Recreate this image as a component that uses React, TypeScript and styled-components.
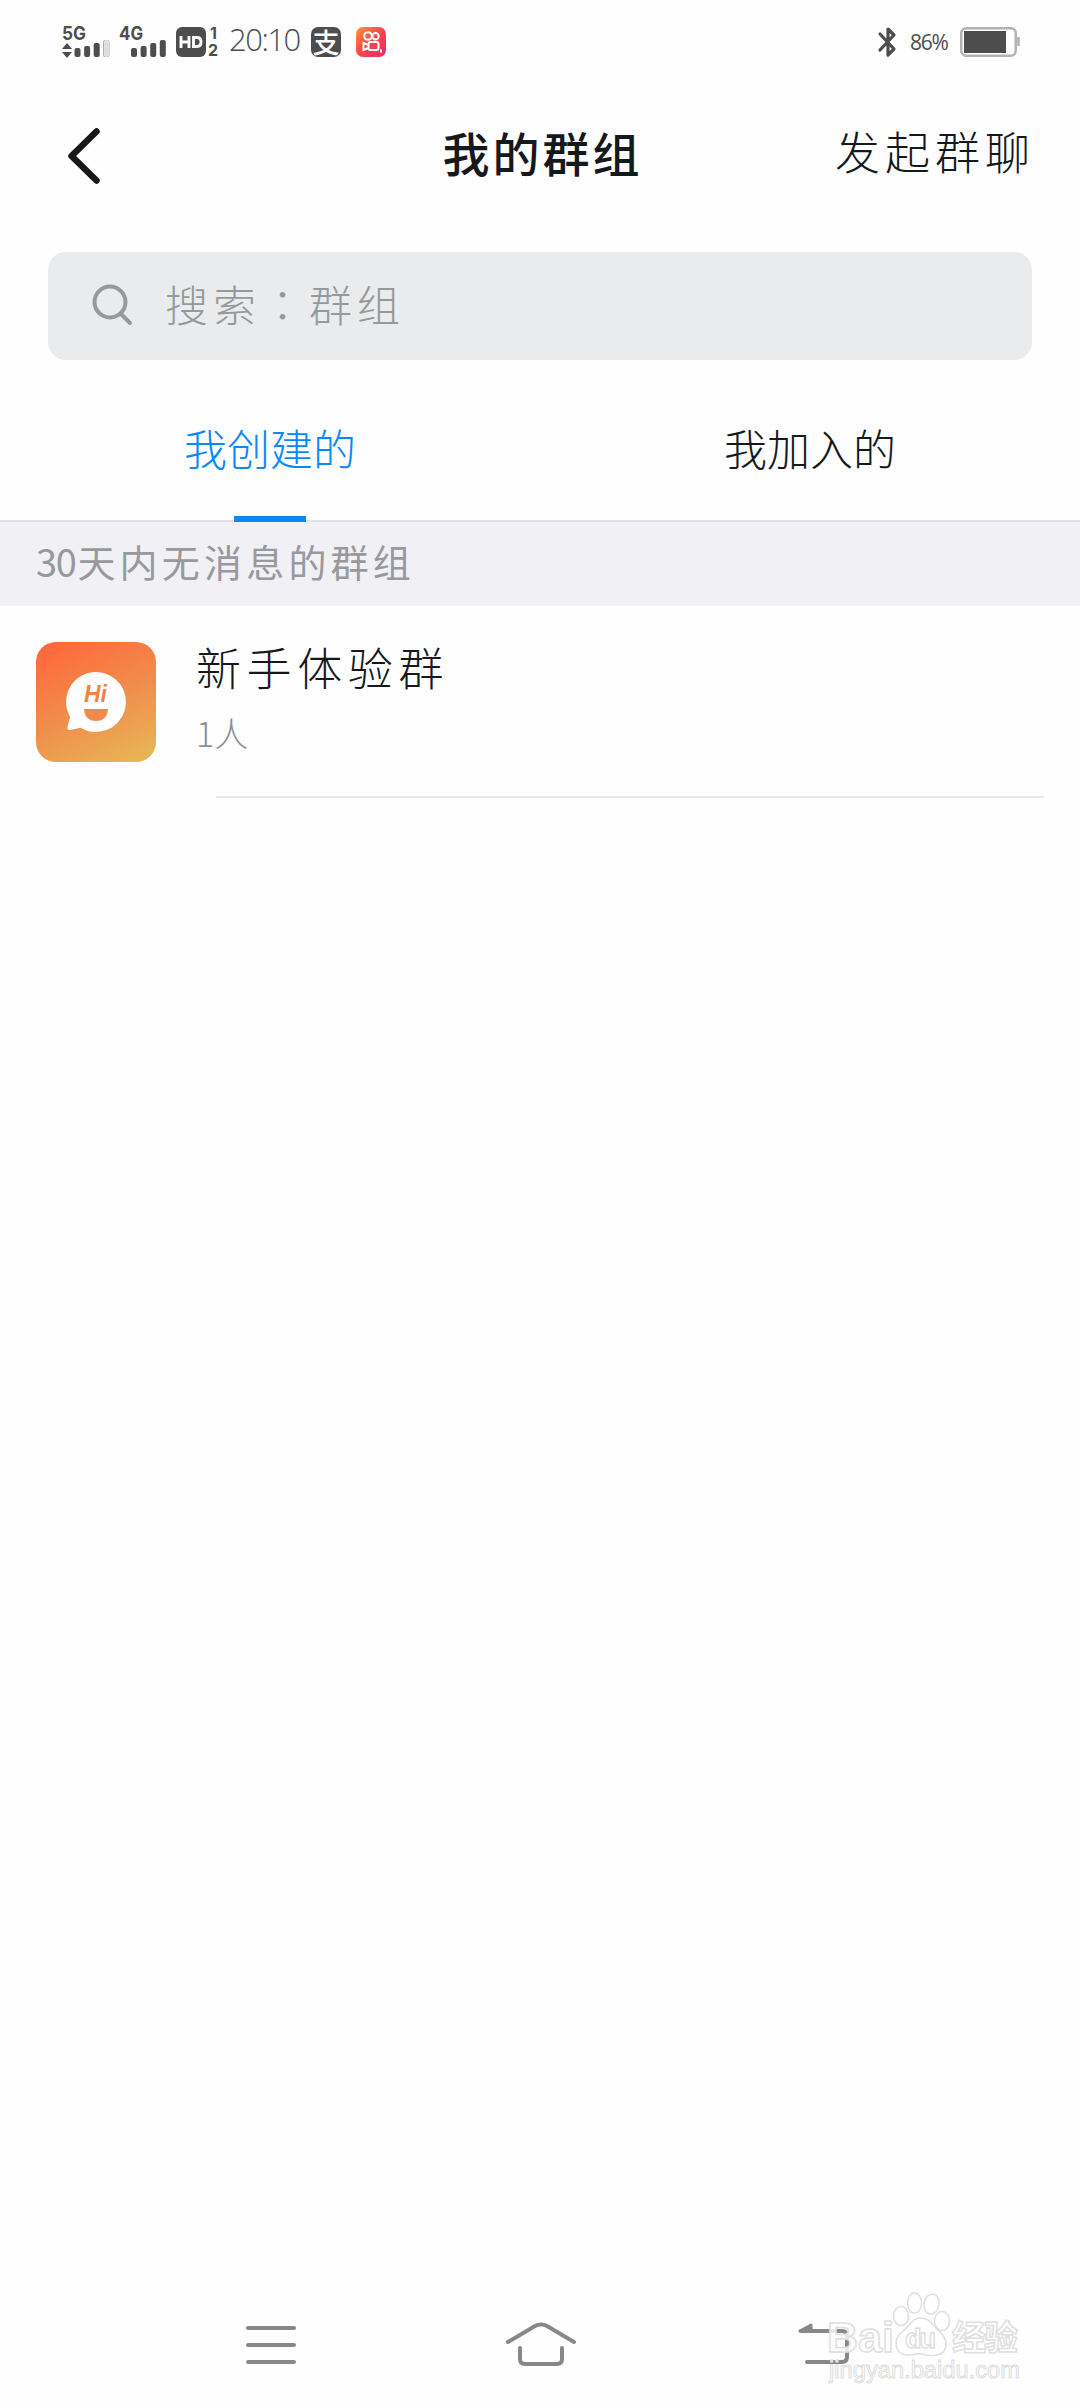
import React from "react";
import styled, { createGlobalStyle } from "styled-components";

const ink = "#16191c";
const chrome = "#4d4d4d";
const muted = "#98999d";
const blue = "#0a88f5";

const GlobalStyle = createGlobalStyle`
  *, *::before, *::after { box-sizing: border-box; }
  body {
    margin: 0;
    background: #fefefe;
    font-family: "Noto Sans CJK SC", "Noto Sans", sans-serif;
    font-weight: 300;
  }
  svg { display: block; flex: none; overflow: visible; }
`;

const Screen = styled.div`
  display: flex;
  flex-direction: column;
  width: 1080px;
  height: 2408px;
  background: #fefefe;
  color: ${ink};
  position: relative;
  overflow: hidden;
`;

const StatusBar = styled.header`
  display: flex;
  align-items: center;
  justify-content: space-between;
  height: 84px;
  padding: 0 60px 0 62px;
  color: ${chrome};
`;

const StatusGroup = styled.div<{ $gap: number }>`
  display: flex;
  align-items: center;
  gap: ${(p) => p.$gap}px;
`;

const SignalPair = styled.div`
  display: flex;
  gap: 8px;
  margin-right: 9px;
`;

const StatusText = styled.span<{ $size: number; $width: number; $spacing?: number }>`
  width: ${(p) => p.$width}px;
  font-family: "Open Sans", "Noto Sans", sans-serif;
  font-size: ${(p) => p.$size}px;
  font-weight: 400;
  letter-spacing: ${(p) => p.$spacing ?? 0}px;
  line-height: 40px;
  white-space: nowrap;
`;

const ClockText = styled(StatusText)`
  margin: -6px 0 0 10px;
  font-weight: 300;
`;

const AppBadge = styled.span<{ $background: string; $marginLeft: number }>`
  display: flex;
  align-items: center;
  justify-content: center;
  width: 30px;
  height: 30px;
  margin-left: ${(p) => p.$marginLeft}px;
  border-radius: 7px;
  background: ${(p) => p.$background};
  color: #fff;
  font-size: 27px;
  font-weight: 500;
  line-height: 30px;
`;

const TitleBar = styled.div`
  display: grid;
  grid-template-columns: 1fr auto 1fr;
  align-items: center;
  height: 140px;
  padding: 0 45px 0 64px;
`;

const BackButton = styled.button`
  justify-self: start;
  padding: 0;
  margin-top: 4px;
  border: 0;
  background: none;
`;

const Title = styled.h1`
  margin: 0 0 5px;
  font-size: 47px;
  font-weight: 500;
  letter-spacing: 3px;
  line-height: 70px;
  transform: translateX(-7px);
`;

const TitleAction = styled.button`
  justify-self: end;
  margin: 0 0 6px;
  padding: 0;
  border: 0;
  background: none;
  color: ${ink};
  font: inherit;
  font-size: 45px;
  letter-spacing: 5px;
  line-height: 70px;
  white-space: nowrap;
`;

const SearchBox = styled.div`
  display: flex;
  align-items: center;
  gap: 29px;
  height: 108px;
  margin: 28px 48px 0;
  padding: 0 0 0 42px;
  border-radius: 18px;
  background: #eaebed;
  color: #96999b;
`;

const Placeholder = styled.span`
  margin-bottom: 6px;
  font-size: 43px;
  letter-spacing: 5px;
  line-height: 64px;

  i {
    font-family: "Noto Sans CJK TC", sans-serif;
    font-style: normal;
  }
`;

const Tabs = styled.nav`
  display: grid;
  grid-template-columns: 1fr 1fr;
  height: 162px;
  border-bottom: 2px solid #e1e2e6;
`;

const Tab = styled.button<{ $active?: boolean }>`
  position: relative;
  display: flex;
  align-items: center;
  justify-content: center;
  padding: 14px 0 0;
  border: 0;
  background: none;
  color: ${(p) => (p.$active ? blue : ink)};
  font: inherit;
  font-size: 43px;

  &::after {
    content: "";
    display: ${(p) => (p.$active ? "block" : "none")};
    position: absolute;
    left: 234px;
    bottom: -2px;
    width: 72px;
    height: 6px;
    background: ${blue};
  }
`;

const SectionLabel = styled.h2`
  height: 84px;
  margin: 0;
  padding: 0 36px;
  background: #f1f0f5;
  color: ${muted};
  font-size: 38px;
  font-weight: 400;
  letter-spacing: 4.2px;
  line-height: 78px;
  white-space: nowrap;

  span {
    letter-spacing: -1.4px;
    margin-right: 2px;
  }
`;

const GroupRow = styled.article`
  display: flex;
  gap: 40px;
  height: 190px;
  padding: 36px 36px 0;
`;

const Avatar = styled.div`
  width: 120px;
  height: 120px;
  border-radius: 20px;
  background: linear-gradient(155deg, #ff6a3d 8%, #f08c4c 50%, #e8b455 94%);
`;

const GroupInfo = styled.div`
  display: flex;
  flex-direction: column;
  flex: 1;
`;

const GroupName = styled.h3`
  margin: -5px 0 0;
  font-size: 45px;
  font-weight: 300;
  letter-spacing: 5.6px;
  line-height: 60px;
`;

const MemberCount = styled.p`
  margin: 8px 0 0;
  color: #8a9197;
  font-size: 34px;
  line-height: 56px;
`;

const Divider = styled.hr`
  width: 828px;
  height: 2px;
  margin: 0 36px 0 216px;
  border: 0;
  background: #e9e9ea;
`;

const Spacer = styled.div`
  flex: 1;
`;

const NavigationBar = styled.footer`
  display: flex;
  justify-content: space-between;
  align-items: center;
  height: 124px;
  padding: 0 230px 0 244px;
`;

const HomeIcon = styled.svg`
  margin-left: -12px;
`;

const Watermark = styled.svg`
  position: absolute;
  left: 819px;
  top: 2285px;
`;

function Signal({ label, data }: { label: string; data?: boolean }) {
  return (
    <svg width={data ? 49 : 48} height="36" viewBox={`0 0 ${data ? 49 : 48} 36`} fill={chrome}>
      <text x="0" y="16" fontFamily="Inter, sans-serif" fontSize="19" fontWeight="700" textLength="24" lengthAdjust="spacingAndGlyphs">
        {label}
      </text>
      {data && <path d="M0 25 5 19l5 6zM0 28l5 6 5-6z" />}
      {[9, 11, 14, 17].map((h, i) => (
        <rect key={h} x={(data ? 12.5 : 12) + i * 9.6} y={33 - h} width="6" height={h} rx="2" />
      ))}
      {data && <rect x="41.500" y="16" width="6" height="17" rx="2" fill="#dedede" />}
    </svg>
  );
}

function HdIcon() {
  return (
    <svg width="43" height="32" viewBox="0 0 43 32" fill={chrome}>
      <rect x="0" y="1" width="30" height="30" rx="6" />
      <path d="M5 10v12M13 10v12M5 16h8M17.500 11.500h3.500q4 0 4 4.500t-4 4.500h-3.500z" fill="none" stroke="#fff" strokeWidth="2.900" />
      <g fontFamily="Inter, sans-serif" fontSize="16" fontWeight="700">
        <text x="34" y="13">1</text>
        <text x="32" y="30">2</text>
      </g>
    </svg>
  );
}

function CameraIcon() {
  return (
    <svg width="24" height="24" viewBox="0 0 24 24" fill="none" stroke="#fff" strokeWidth="2">
      <circle cx="9" cy="6" r="3.800" />
      <circle cx="16.500" cy="6.300" r="3.200" />
      <rect x="9.500" y="12" width="10" height="8" rx="2" />
      <path d="m9.500 15-5-2v7l5-2M22 19.500v3" />
    </svg>
  );
}

function Bluetooth() {
  return (
    <svg width="20" height="32" viewBox="0 0 20 32" fill="none" stroke={chrome} strokeWidth="3.200" strokeLinejoin="round" strokeLinecap="round">
      <path d="m2 8 14 15-6 6V3l6 6L2 24" />
    </svg>
  );
}

function Battery() {
  return (
    <svg width="60" height="30" viewBox="0 0 60 30">
      <rect x="1.250" y="1.250" width="54.500" height="27.500" rx="5" fill="#fff" stroke="#b3b3b3" strokeWidth="2.500" />
      <rect x="4" y="4" width="42" height="22" fill={chrome} />
      <path d="M58.500 10v9" stroke="#b3b3b3" strokeWidth="2.500" />
    </svg>
  );
}

function BubbleIcon() {
  return (
    <svg width="120" height="120" viewBox="0 0 120 120">
      <path d="M60 30a30 30 0 1 1-15.500 55.700L34 88q-3 .5-2.600-3l2.700-10A30 30 0 0 1 60 30z" fill="#fff" />
      <text x="48" y="60" fill="#f08446" fontFamily="Liberation Sans, sans-serif" fontSize="23" fontStyle="italic" fontWeight="700">
        Hi
      </text>
      <path d="M48 67h24q-1 12-12 12T48 67z" fill="#f08a4b" />
    </svg>
  );
}

function WatermarkLogo() {
  return (
    <Watermark width="220" height="115" viewBox="0 0 220 115" fill="#fff" fillOpacity=".82" stroke="#dfdfdf" strokeWidth="1.500">
      <g fontFamily="Liberation Sans, sans-serif" fontWeight="700">
        <text x="8" y="67" fontSize="43" textLength="67" lengthAdjust="spacingAndGlyphs">Bai</text>
        <path d="M101 33c-8 0-9 7-17 13-12 9-7 25 5 24 6 0 9-2 14-1 6 2 18 3 22-3 5-8 0-16-6-21s-8-12-18-12z" />
        <ellipse cx="82" cy="31" rx="7.500" ry="9.500" />
        <ellipse cx="95.500" cy="18" rx="7" ry="10" />
        <ellipse cx="112.500" cy="19" rx="7.500" ry="10" transform="rotate(10 112 19)" />
        <ellipse cx="123" cy="36" rx="7.500" ry="9.500" />
        <text x="86" y="63" fontSize="27" textLength="31">du</text>
        <text x="133" y="65" fontFamily="Noto Sans CJK SC, sans-serif" fontSize="34" textLength="66">经验</text>
        <text x="10" y="93" fontSize="23" fontWeight="400" strokeWidth="1" textLength="191" lengthAdjust="spacingAndGlyphs">jingyan.baidu.com</text>
      </g>
    </Watermark>
  );
}

export default function App() {
  return (
    <>
      <GlobalStyle />
      <Screen>
        <StatusBar>
          <StatusGroup $gap={0}>
            <SignalPair>
              <Signal label="5G" data />
              <Signal label="4G" />
            </SignalPair>
            <HdIcon />
            <ClockText $size={31} $width={72} $spacing={-1.5}>20:10</ClockText>
            <AppBadge $background={chrome} $marginLeft={10}>支</AppBadge>
            <AppBadge $background="linear-gradient(135deg, #ff9433, #f8454c 50%, #e82c68)" $marginLeft={15}>
              <CameraIcon />
            </AppBadge>
          </StatusGroup>
          <StatusGroup $gap={12}>
            <Bluetooth />
            <StatusText $size={21} $width={38} $spacing={-1.2}>86%</StatusText>
            <Battery />
          </StatusGroup>
        </StatusBar>

        <TitleBar>
          <BackButton aria-label="返回">
            <svg width="40" height="60" viewBox="0 0 40 60" fill="none" stroke={ink} strokeWidth="6.500" strokeLinecap="round" strokeLinejoin="round">
              <path d="M32.500 5.500 7.500 30l25 24.500" />
            </svg>
          </BackButton>
          <Title>我的群组</Title>
          <TitleAction>发起群聊</TitleAction>
        </TitleBar>

        <SearchBox>
          <svg width="46" height="46" viewBox="0 0 46 46" fill="none" stroke="#96999b" strokeWidth="4" strokeLinecap="round">
            <circle cx="20" cy="19" r="15.500" />
            <path d="m31 31 9 9" />
          </svg>
          <Placeholder>搜索<i lang="zh-Hant">：</i>群组</Placeholder>
        </SearchBox>

        <Tabs>
          <Tab $active>我创建的</Tab>
          <Tab>我加入的</Tab>
        </Tabs>

        <SectionLabel>
          <span>30</span>天内无消息的群组
        </SectionLabel>

        <GroupRow>
          <Avatar>
            <BubbleIcon />
          </Avatar>
          <GroupInfo>
            <GroupName>新手体验群</GroupName>
            <MemberCount>1人</MemberCount>
          </GroupInfo>
        </GroupRow>
        <Divider />

        <Spacer />

        <NavigationBar>
          <svg width="54" height="50" viewBox="0 0 54 50" fill="none" stroke="#888" strokeWidth="4" strokeLinecap="round">
            <path d="M4 7h46M4 24h46M4 41h46" />
          </svg>
          <HomeIcon width="72" height="50" viewBox="0 0 72 50" fill="none" stroke="#888" strokeWidth="4" strokeLinecap="round">
            <path d="M3 21 30 5q6-3 12 0l27 16M15 27v11q0 5 5 5h32q5 0 5-5V27" />
          </HomeIcon>
          <svg width="54" height="50" viewBox="0 0 54 50" fill="none" stroke="#888" strokeWidth="4" strokeLinecap="round">
            <path d="M5 10h41q5 0 5 5v21q0 5-5 5H11" />
            <path d="M4 10 15 4v6z" fill="#888" strokeWidth="3" strokeLinejoin="round" />
          </svg>
        </NavigationBar>
        <WatermarkLogo />
      </Screen>
    </>
  );
}
